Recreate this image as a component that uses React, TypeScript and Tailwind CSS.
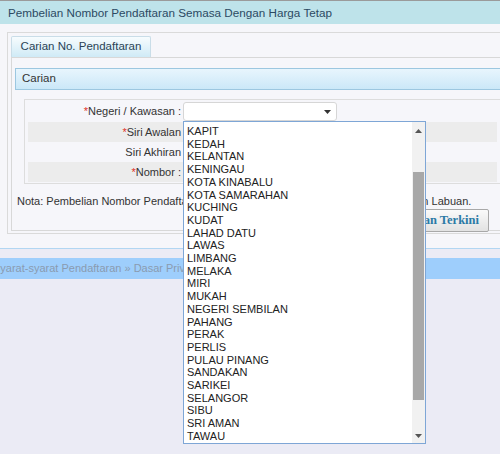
import React from 'react';

const negeri = [
  'KAPIT',
  'KEDAH',
  'KELANTAN',
  'KENINGAU',
  'KOTA KINABALU',
  'KOTA SAMARAHAN',
  'KUCHING',
  'KUDAT',
  'LAHAD DATU',
  'LAWAS',
  'LIMBANG',
  'MELAKA',
  'MIRI',
  'MUKAH',
  'NEGERI SEMBILAN',
  'PAHANG',
  'PERAK',
  'PERLIS',
  'PULAU PINANG',
  'SANDAKAN',
  'SARIKEI',
  'SELANGOR',
  'SIBU',
  'SRI AMAN',
  'TAWAU',
];

function Req() {
  return <span className="text-[#e0302a]">*</span>;
}

export default function App() {
  return (
    <div className="relative h-[454px] w-[500px] overflow-hidden bg-[#ebebf5] font-['Liberation_Sans',Arial,sans-serif] text-[11px] text-[#333]">
      {/* header */}
      <div className="flex h-[24px] items-center border-t border-[#9a9a9a] bg-[#bee3ea] pl-[8px] text-[11.7px] text-[#2c4a63]">
        Pembelian Nombor Pendaftaran Semasa Dengan Harga Tetap
      </div>

      <div className="bg-[#f6f6fa] pt-[8px] pb-[14px]">
        <div className="ml-[7px] border border-r-0 border-[#dadada] pt-[3px] pl-[3px] pb-[2px]">
          <div className="flex h-[21px] w-[140px] items-center justify-center rounded-t-[2px] border border-b-0 border-[#c9dde8] bg-gradient-to-b from-[#f7fcfe] to-[#cfeaf6] text-[11.5px] text-[#2a4356]">
            Carian No. Pendaftaran
          </div>

          <div className="h-[174px] border border-r-0 border-[#d8d8d8] pt-[10px] pl-[3px]">
            <div className="flex h-[22px] items-center border border-r-0 border-[#9cc7e0] bg-gradient-to-b from-[#e8f5fd] to-[#cbe8f8] pl-[6px] text-[11.5px] text-[#333]">
              Carian
            </div>

            <div className="mt-[9px] ml-[9px] border border-r-0 border-[#dddddd] px-[3px] py-px">
              <div className="flex h-[21px] items-center">
                <div className="w-[153px] text-right">
                  <Req />Negeri / Kawasan :
                </div>
                <div className="ml-[2px] flex h-[19px] w-[154px] items-center justify-end rounded-[3px] border border-[#d6d6d6] bg-white pr-[5px]">
                  <svg width="7" height="4" viewBox="0 0 7 4">
                    <path d="M0 0h7L3.5 4z" fill="#333" />
                  </svg>
                </div>
              </div>
              <div className="flex h-[20px] items-center bg-[#ececec]">
                <div className="w-[153px] text-right">
                  <Req />Siri Awalan
                </div>
              </div>
              <div className="flex h-[20px] items-center">
                <div className="w-[153px] text-right">Siri Akhiran</div>
              </div>
              <div className="flex h-[20px] items-center bg-[#ececec]">
                <div className="w-[153px] text-right">
                  <Req />Nombor :
                </div>
              </div>
            </div>

            <div className="mt-[10px] whitespace-nowrap pl-[2px] leading-[14px]">
              Nota: Pembelian Nombor Pendaftaran Semasa tidak termasuk Wilayah Persekutuan Labuan.
            </div>

            <div className="mt-[1px] flex justify-end pr-[11px]">
              <button
                type="button"
                className="h-[23px] rounded-[2px] border border-[#a8a8a8] bg-gradient-to-b from-[#fafafa] to-[#e2e2e2] px-[9px] font-['Liberation_Serif',serif] text-[12.5px] font-bold text-[#2b7aa6]"
              >
                Semakan Terkini
              </button>
            </div>
          </div>
        </div>
      </div>

      <div className="h-px bg-[#b2d6f2]" />
      <div className="mt-[9px] flex h-[21px] items-center bg-[#9ecefc] whitespace-nowrap text-[#8a9bb0]">
        <span className="ml-[-7px]">Syarat-syarat Pendaftaran » Dasar Privasi</span>
      </div>

      {/* open dropdown list */}
      <div className="absolute top-[121px] left-[183px] flex h-[323px] w-[243px] border border-[#7ea6d6] bg-white">
        <ul className="flex-1 pt-[3px] pl-[3px] text-[11px] leading-[12.7px] text-[#222]">
          {negeri.map((n) => (
            <li key={n}>{n}</li>
          ))}
        </ul>
        <div className="flex w-[13px] flex-col items-center bg-[#f1f1f1]">
          <div className="flex h-[17px] items-center">
            <svg width="7" height="4" viewBox="0 0 7 4">
              <path d="M3.5 0L7 4H0z" fill="#555" />
            </svg>
          </div>
          <div className="mt-[33px] h-[228px] w-[11px] bg-[#a8a8a8]" />
          <div className="flex flex-1 items-end pb-[5px]">
            <svg width="7" height="4" viewBox="0 0 7 4">
              <path d="M0 0h7L3.5 4z" fill="#555" />
            </svg>
          </div>
        </div>
      </div>
    </div>
  );
}
